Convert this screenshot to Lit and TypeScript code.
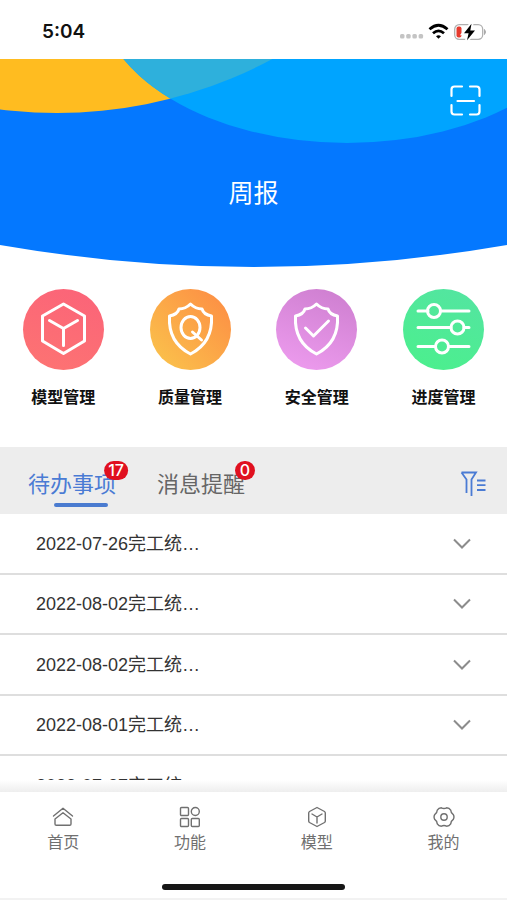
import { LitElement, html, css, svg } from "lit";
import { customElement, state } from "lit/decorators.js";
import { classMap } from "lit/directives/class-map.js";

const shield = svg`<path d="M40.500 15C44 18.500 48 20 52 20C53 23.500 56 26 61.500 27C62.500 44 56 57 40.500 65C25 57 18.500 44 19.500 27C25 26 28 23.500 29 20C33 20 37 18.500 40.500 15Z"/>`;

const shortcuts = [
  {
    label: "模型管理",
    tone: "red",
    icon: svg`<path d="M40.500 15L61.500 27V52L40.500 64.500L19.500 52V27ZM26.500 31.500L40.500 39.500L54.500 31.500M40.500 39.500V56.500"/>`,
  },
  {
    label: "质量管理",
    tone: "orange",
    icon: svg`${shield}<ellipse cx="40.500" cy="38.500" rx="9.500" ry="11"/><path d="M42.500 43L51.500 51"/>`,
  },
  {
    label: "安全管理",
    tone: "purple",
    icon: svg`${shield}<path d="M29.500 39L37.500 47L52.500 32"/>`,
  },
  {
    label: "进度管理",
    tone: "green",
    icon: svg`<path d="M15 22H25M38 22H66M15 38.500H48M61 38.500H66M15 57.500H32M46 57.500H66"/><circle cx="31" cy="22" r="6.500"/><circle cx="54.500" cy="38.500" r="6.500"/><circle cx="39" cy="57.500" r="6.500"/>`,
  },
];

const tabs = [
  { label: "待办事项", count: 17 },
  { label: "消息提醒", count: 0 },
];

const tasks = ["2022-07-26", "2022-08-02", "2022-08-02", "2022-08-01", "2022-07-27"];

const navItems = [
  {
    label: "首页",
    icon: svg`<path d="M1.500 10L11 2.200L20.500 10M3 13L11 6.800L19 13V18Q19 19.300 17.700 19.300H4.300Q3 19.300 3 18Z"/>`,
  },
  {
    label: "功能",
    icon: svg`<rect x="1.500" y="1.500" width="8" height="8" rx="1"/><circle cx="16.300" cy="5.500" r="4"/><rect x="1.500" y="12.500" width="8" height="8" rx="1"/><rect x="12.300" y="12.500" width="8" height="8" rx="1"/>`,
  },
  {
    label: "模型",
    icon: svg`<path d="M11 1.500L18.500 5.500Q19.300 6 19.300 7V15Q19.300 16 18.500 16.500L11 20.500L3.500 16.500Q2.700 16 2.700 15V7Q2.700 6 3.500 5.500ZM6 8L11 11L16 8M11 11V17"/>`,
  },
  {
    label: "我的",
    icon: svg`<path d="M20.300 8.700Q21.600 11 20.300 13.300Q17.800 14.900 17.700 17.900Q16.300 20.200 13.600 20.200Q11 18.800 8.400 20.200Q5.700 20.200 4.300 17.900Q4.200 14.900 1.700 13.300Q.4 11 1.700 8.700Q4.200 7.100 4.300 4.100Q5.700 1.800 8.400 1.800Q11 3.200 13.600 1.800Q16.300 1.800 17.700 4.100Q17.800 7.100 20.300 8.700Z"/><circle cx="11" cy="11" r="3.200"/>`,
  },
];

@customElement("app-root")
export class AppRoot extends LitElement {
  @state() private activeTab = 0;

  static styles = css`
    :host {
      display: flex;
      flex-direction: column;
      height: 100vh;
      overflow: hidden;
      background: #fff;
      color: #333;
      font-family: "Liberation Sans", "Noto Sans CJK SC", sans-serif;
    }
    button {
      padding: 0;
      border: 0;
      background: none;
      color: inherit;
      font: inherit;
      cursor: pointer;
    }
    a {
      color: inherit;
      text-decoration: none;
    }
    svg {
      display: block;
      fill: none;
      stroke: currentColor;
    }
    .status {
      flex: none;
      display: flex;
      align-items: center;
      justify-content: space-between;
      height: 59px;
      box-sizing: border-box;
      padding: 4px 20px 0 42px;
      color: #111;
    }
    .time {
      font: 600 19px/24px Inter, sans-serif;
    }
    .hero {
      flex: none;
      display: grid;
      height: 208px;
    }
    .hero > * {
      grid-area: 1 / 1;
    }
    .waves {
      width: 100%;
      height: 208px;
      stroke: none;
    }
    .scan {
      justify-self: end;
      align-self: start;
      margin: 26px 26px 0 0;
      color: #fff;
    }
    .title {
      margin: 0;
      place-self: center;
      padding-top: 60px;
      color: #fff;
      font-size: 25px;
      line-height: 36px;
      font-weight: 400;
    }
    .shortcuts {
      flex: none;
      display: grid;
      grid-template-columns: repeat(4, 1fr);
      padding: 22px 0 37px;
    }
    .shortcut {
      display: flex;
      flex-direction: column;
      align-items: center;
      gap: 16px;
      color: #111;
      font-size: 16px;
      line-height: 24px;
      font-weight: 700;
    }
    .disc {
      border-radius: 50%;
      color: #fff;
      stroke-width: 3;
      stroke-linecap: round;
      stroke-linejoin: round;
    }
    .red { background: linear-gradient(20deg, #fd7472, #fb6379); }
    .orange { background: linear-gradient(45deg, #fac64c, #fd8a44); }
    .purple { background: linear-gradient(20deg, #ef9df0, #cc7dce); }
    .green { background: linear-gradient(20deg, #4bf08c, #54e4a2); }
    .tabs {
      flex: none;
      display: flex;
      align-items: center;
      gap: 41px;
      height: 67px;
      box-sizing: border-box;
      padding: 8px 20px 0 28px;
      background: #ededed;
    }
    .tab {
      position: relative;
      color: #666;
      font-size: 22px;
      line-height: 32px;
    }
    .tab.active {
      color: #4a7bd4;
    }
    .tab.active::after {
      content: "";
      position: absolute;
      left: 26px;
      bottom: -6px;
      width: 54px;
      height: 4px;
      border-radius: 2px;
      background: #4a7bd0;
    }
    .badge {
      position: absolute;
      top: -8px;
      left: 100%;
      transform: translateX(-50%);
      min-width: 20px;
      height: 19px;
      box-sizing: border-box;
      padding: 0 4px;
      border-radius: 10px;
      background: #e0101f;
      color: #fff;
      font: 500 16px/19px Inter, sans-serif;
    }
    .filter {
      margin-left: auto;
      color: #4a7bd4;
    }
    .list {
      flex: 1;
      min-height: 0;
      overflow: hidden;
      margin: 0;
      padding: 0;
      list-style: none;
    }
    .row {
      display: flex;
      align-items: center;
      justify-content: space-between;
      width: 100%;
      height: 60px;
      box-sizing: border-box;
      padding: 0 36px;
      border-bottom: 2px solid #dedede;
      font-size: 18px;
      line-height: 26px;
    }
    li:nth-child(odd) .row {
      height: 61px;
    }
    .chevron {
      color: #8c8c8c;
    }
    .fade {
      flex: none;
      height: 12px;
      background: linear-gradient(#fff, #eee);
    }
    .nav {
      flex: none;
      display: grid;
      grid-template-columns: repeat(4, 1fr);
      padding-top: 14px;
      color: #707070;
    }
    .nav-item {
      display: flex;
      flex-direction: column;
      align-items: center;
      gap: 3px;
      font-size: 16px;
      line-height: 24px;
    }
    .nav-icon {
      stroke-width: 1.4;
      stroke-linecap: round;
      stroke-linejoin: round;
    }
    .home {
      flex: none;
      display: flex;
      justify-content: center;
      padding: 29px 0 8px;
      border-bottom: 2px solid #f2f2f2;
    }
    .home-bar {
      width: 36%;
      height: 6px;
      border-radius: 3px;
      background: #161616;
    }
  `;

  render() {
    return html`
      <header class="status">
        <span class="time">5:04</span>
        <svg width="87" height="18" viewBox="0 0 87 18" stroke="none" aria-hidden="true">
          <g fill="#c4c4c4" stroke="none">
            <rect y="11" width="4.500" height="4.500" rx="1.500" /><rect x="6.200" y="11" width="4.500" height="4.500" rx="1.500" />
            <rect x="12.400" y="11" width="4.500" height="4.500" rx="1.500" /><rect x="18.600" y="11" width="4.500" height="4.500" rx="1.500" />
          </g>
          <g stroke="#000" stroke-width="2.800">
            <path d="M29.500 6.200Q38.500-1.800 47.500 6.200M33 10.300Q38.500 5.500 44 10.300" />
            <path d="M36 13.200Q38.500 11.200 41 13.200L38.500 15.800Z" fill="#000" stroke="none" />
          </g>
          <rect x="54.700" y="1.700" width="28" height="14.600" rx="4.500" stroke="#b0b0b0" stroke-width="1.300" />
          <path d="M84.500 6.500Q86.500 9 84.500 11.500Z" fill="#aaa" stroke="#aaa" />
          <rect x="56.500" y="3.500" width="5" height="11" rx="2" fill="#e63a2e" stroke="none" />
          <path d="M71.500 .8L64 10.200H68.600L67 17.200L75 7.400H70.300Z" fill="#000" stroke="#fff" stroke-width="4" paint-order="stroke" />
        </svg>
      </header>

      <section class="hero">
        <svg class="waves" viewBox="0 0 507 208" preserveAspectRatio="none" aria-hidden="true">
          <path fill="#0478ff" d="M0 0H507V186Q253.500 230 0 186Z" />
          <circle fill="#ffbc20" cx="57" cy="-403" r="457" />
          <ellipse fill="#00a4ff" cx="347" cy="-68" rx="250" ry="152" />
          <clipPath id="overlap"><circle cx="57" cy="-403" r="457" /></clipPath>
          <ellipse fill="#2eb0dc" cx="347" cy="-68" rx="250" ry="152" clip-path="url(#overlap)" />
        </svg>
        <button class="scan" aria-label="扫一扫">
          <svg width="31" height="32" viewBox="0 0 31 32" stroke-width="2.200" stroke-linecap="round">
            <path d="M1.500 11V4.500Q1.500 1.500 4.500 1.500H12M20 1.500H26.500Q29.500 1.500 29.500 4.500V11M29.500 20V26.500Q29.500 29.500 26.500 29.500H20M12 29.500H4.500Q1.500 29.500 1.500 26.500V20M7.500 16H24" />
          </svg>
        </button>
        <h1 class="title">周报</h1>
      </section>

      <section class="shortcuts">
        ${shortcuts.map(
          (s) => html`<a class="shortcut" href="#">
            <svg class="disc ${s.tone}" width="81" height="81" viewBox="0 0 81 81" aria-hidden="true">${s.icon}</svg>
            <span>${s.label}</span>
          </a>`
        )}
      </section>

      <div class="tabs">
        ${tabs.map(
          (t, i) => html`<button
            class=${classMap({ tab: true, active: i === this.activeTab })}
            @click=${() => (this.activeTab = i)}
          >
            ${t.label}<span class="badge">${t.count}</span>
          </button>`
        )}
        <button class="filter" aria-label="筛选">
          <svg width="27" height="27" viewBox="0 0 27 27" stroke-width="1.800">
            <path d="M1.500 1.500H16L11.500 8.500V25M1.500 1.500L6.500 8.500V22M17 9.500H25.500M17 14.200H25.500M17 19H25.500" />
          </svg>
        </button>
      </div>

      <ul class="list">
        ${tasks.map(
          (date) => html`<li>
            <button class="row">
              <span>${date}完工统…</span>
              <svg class="chevron" width="18" height="12" viewBox="0 0 18 12" stroke-width="2" aria-hidden="true">
                <path d="M1 1.500L9 9.500L17 1.500" />
              </svg>
            </button>
          </li>`
        )}
      </ul>
      <div class="fade"></div>

      <nav class="nav">
        ${navItems.map(
          (n) => html`<a class="nav-item" href="#">
            <svg class="nav-icon" width="22" height="22" viewBox="0 0 22 22" aria-hidden="true">${n.icon}</svg>
            <span>${n.label}</span>
          </a>`
        )}
      </nav>
      <div class="home"><div class="home-bar"></div></div>
    `;
  }
}
